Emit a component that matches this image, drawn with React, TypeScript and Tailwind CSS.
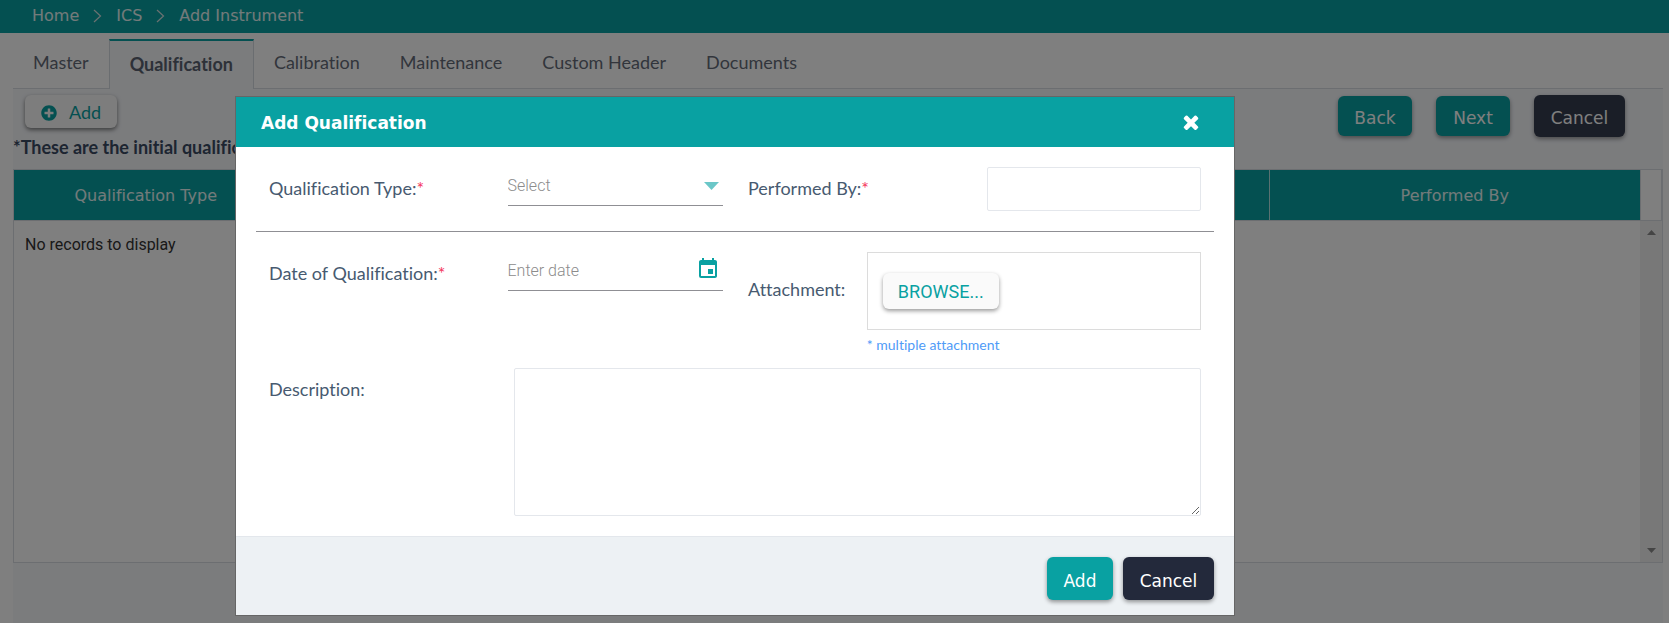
import React from "react";
import { FaPlusCircle } from "react-icons/fa";
import { MdEvent } from "react-icons/md";

const tabs = ["Master", "Qualification", "Calibration", "Maintenance", "Custom Header", "Documents"];

function Required() {
  return <span className="text-[#f4365c]">*</span>;
}

function Chevron() {
  return (
    <svg width="9" height="14" viewBox="0 0 9 14" fill="none" stroke="#d5e2e3" strokeWidth="1.2" aria-hidden="true">
      <path d="M1 1l6.5 6L1 13" />
    </svg>
  );
}

function CloseIcon() {
  return (
    <svg width="22" height="22" viewBox="0 0 1792 1792" fill="currentColor" aria-hidden="true">
      <path d="M1490 1322q0 40-28 68l-136 136q-28 28-68 28t-68-28l-294-294-294 294q-28 28-68 28t-68-28l-136-136q-28-28-28-68t28-68l294-294-294-294q-28-28-28-68t28-68l136-136q28-28 68-28t68 28l294 294 294-294q28-28 68-28t68 28l136 136q28 28 28 68t-28 68l-294 294 294 294q28 28 28 68z" />
    </svg>
  );
}

type ActionProps = { label: string; className: string };

function Action({ label, className }: ActionProps) {
  return (
    <button
      type="button"
      className={`rounded-md px-4 pt-1 font-[DejaVu_Sans,sans-serif] text-[17px] leading-6 text-white shadow-[0_2px_4px_rgba(0,0,0,0.4)] ${className}`}
    >
      {label}
    </button>
  );
}

function Page() {
  return (
    <div className="flex min-h-screen flex-col bg-white">
      <nav className="flex h-[33px] items-center gap-3.5 bg-[#09a1a2] pb-0.5 pl-8 font-[DejaVu_Sans,sans-serif] text-[16px] text-white/90">
        <a href="#home">Home</a>
        <Chevron />
        <a href="#ics">ICS</a>
        <Chevron />
        <a href="#add-instrument">Add Instrument</a>
      </nav>
      <div className="ml-[13px] mr-1.5 flex flex-1 flex-col">
        <div className="flex pt-1.5 text-[18px]" role="tablist">
          {tabs.map((tab) =>
            tab === "Qualification" ? (
              <button
                key={tab}
                type="button"
                role="tab"
                aria-selected="true"
                className="h-[50px] border-x border-t-2 border-x-[#d5dae0] border-t-[#09a1a2] bg-[#f6f8fb] px-5 pb-0.5 font-bold text-[#5a6270]"
              >
                {tab}
              </button>
            ) : (
              <button
                key={tab}
                type="button"
                role="tab"
                aria-selected="false"
                className="h-[50px] border-b border-[#d9dde2] px-5 pb-0.5 text-[#646b78]"
              >
                {tab}
              </button>
            ),
          )}
          <div className="flex-1 border-b border-[#d9dde2]" />
        </div>
        <section className="flex flex-1 flex-col bg-[#f6f8fb]">
          <div className="flex h-20 items-start justify-between">
            <div className="pt-1.5">
              <button
                type="button"
                className="ml-3 flex h-[33px] w-[92px] items-center gap-3 rounded-md bg-[#fafafa] pl-4 pt-0.5 text-[18px] text-[#09a1a2] shadow-[0_2px_4px_rgba(0,0,0,0.5)]"
              >
                <FaPlusCircle size={16} />
                Add
              </button>
              <p className="whitespace-nowrap pt-[7px] text-[18px] font-bold leading-6 text-[#3a4a63]">
                *These are the initial qualifications
              </p>
            </div>
            <div className="flex items-center gap-6 pr-[38px] pt-1.5">
              <Action label="Back" className="h-10 w-[74px] bg-[#09a1a2]" />
              <Action label="Next" className="h-10 w-[74px] bg-[#09a1a2]" />
              <Action label="Cancel" className="h-[42px] w-[91px] bg-[#343c4f]" />
            </div>
          </div>
          <div className="flex h-[394px] flex-col border border-[#d9dde2] bg-white">
            <div className="flex border-b border-[#d9dde2]">
              <table className="w-full table-fixed border-collapse">
                <thead>
                  <tr className="h-[50px] bg-[#09a1a2] font-[DejaVu_Sans,sans-serif] text-[16px] text-white/90">
                    <th className="w-[264px] border-r border-white/70 pt-0.5 font-normal">Qualification Type</th>
                    <td className="border-r border-white/70" />
                    <th className="w-[371px] pt-0.5 font-normal">Performed By</th>
                  </tr>
                </thead>
              </table>
              <div className="w-[22px] shrink-0 border-x border-[#d9dde2]" />
            </div>
            <div className="flex flex-1">
              <p className="flex-1 px-[11px] pt-3 font-[Roboto,sans-serif] text-[16px] leading-6 text-[#333333]">
                No records to display
              </p>
              <div className="flex w-[22px] flex-col items-center justify-between bg-[#f1f1f1] py-[9px] text-[#8a8a8a]">
                <svg width="9" height="5" viewBox="0 0 9 5" fill="currentColor" aria-hidden="true">
                  <path d="M0 5L4.500 0L9 5z" />
                </svg>
                <svg width="9" height="5" viewBox="0 0 9 5" fill="currentColor" aria-hidden="true">
                  <path d="M0 0h9L4.500 5z" />
                </svg>
              </div>
            </div>
          </div>
        </section>
      </div>
    </div>
  );
}

function Dialog() {
  return (
    <div
      role="dialog"
      aria-labelledby="dialog-title"
      className="w-[1000px] border border-[#666666] bg-white text-[18px] leading-6 text-[#475a70]"
    >
      <header className="flex h-[50px] items-center justify-between bg-[#09a1a2] pl-[25px] pr-8 text-white">
        <h2 id="dialog-title" className="pt-0.5 font-[DejaVu_Sans,sans-serif] text-[17px] font-bold">
          Add Qualification
        </h2>
        <button type="button" aria-label="Close">
          <CloseIcon />
        </button>
      </header>

      <form className="px-5 pt-5" onSubmit={(event) => event.preventDefault()}>
        <div className="grid grid-cols-4 border-b border-[#8f8f94] pb-5">
          <label htmlFor="type" className="px-[13px] pt-[9px]">
            Qualification Type:
            <Required />
          </label>
          <div className="px-3">
            <div className="flex h-[39px] items-center border-b border-[#8f8f94]">
              <select
                id="type"
                defaultValue=""
                className="min-w-0 flex-1 appearance-none bg-transparent font-[Roboto,sans-serif] text-[16px] font-light text-[#8c8c8c]"
              >
                <option value="">Select</option>
              </select>
              <svg
                width="15"
                height="8"
                viewBox="0 0 15 8"
                fill="currentColor"
                className="mr-1 shrink-0 text-[#6bc7c8]"
                aria-hidden="true"
              >
                <path d="M0 0h15L7.500 8z" />
              </svg>
            </div>
          </div>
          <label htmlFor="performer" className="px-[13px] pt-[9px]">
            Performed By:
            <Required />
          </label>
          <div className="pl-3 pr-[13px]">
            <input id="performer" type="text" className="h-11 w-full rounded-xs border border-[#e4e7ec] px-3" />
          </div>
        </div>

        <div className="grid grid-cols-8 pt-5">
          <label htmlFor="date" className="col-span-2 px-[13px] pt-[9px]">
            Date of Qualification:
            <Required />
          </label>
          <div className="col-span-2 px-3">
            <div className="flex h-[39px] items-center border-b border-[#8f8f94]">
              <input
                id="date"
                type="text"
                placeholder="Enter date"
                className="min-w-0 flex-1 font-[Roboto,sans-serif] text-[16px] font-light placeholder:text-[#8c8c8c]"
              />
              <button type="button" aria-label="Pick a date" className="pb-1 pr-[3px] text-[#09a1a2]">
                <MdEvent size={24} />
              </button>
            </div>
          </div>
          <span className="px-[13px] pt-[25px]">Attachment:</span>
          <div className="col-span-3 pl-3 pr-[13px]">
            <div className="flex h-[78px] items-center border border-[#dcdcdc] px-[15px]">
              <button
                type="button"
                className="h-9 w-[116px] rounded-md bg-[#fafafa] pt-0.5 font-[Roboto,sans-serif] text-[18px] text-[#09a1a2] shadow-[0_2px_4px_rgba(0,0,0,0.4)]"
              >
                BROWSE...
              </button>
            </div>
            <p className="pt-[3px] text-[14px] text-[#4f9bf7]">* multiple attachment</p>
          </div>
        </div>

        <div className="grid grid-cols-4 pb-5 pt-[11px]">
          <label htmlFor="description" className="px-[13px] pt-[9px]">
            Description:
          </label>
          <div className="col-span-3 pl-[18px] pr-[13px]">
            <textarea
              id="description"
              className="block h-[148px] w-full rounded-xs border border-[#e4e7ec] px-3 py-2"
            />
          </div>
        </div>
      </form>

      <footer className="flex h-[79px] items-start justify-end gap-2.5 border-t border-[#e3e7ec] bg-[#edf1f4] pr-5 pt-5">
        <Action label="Add" className="h-[43px] w-[66px] bg-[#09a1a2]" />
        <Action label="Cancel" className="h-[43px] w-[91px] bg-[#23293b]" />
      </footer>
    </div>
  );
}

export default function App() {
  return (
    <div className="relative min-h-screen overflow-hidden font-[Lato,sans-serif] [font-variant-ligatures:no-common-ligatures]">
      <Page />
      <div className="absolute inset-0 bg-black/50 pl-[235px] pt-24">
        <Dialog />
      </div>
    </div>
  );
}
